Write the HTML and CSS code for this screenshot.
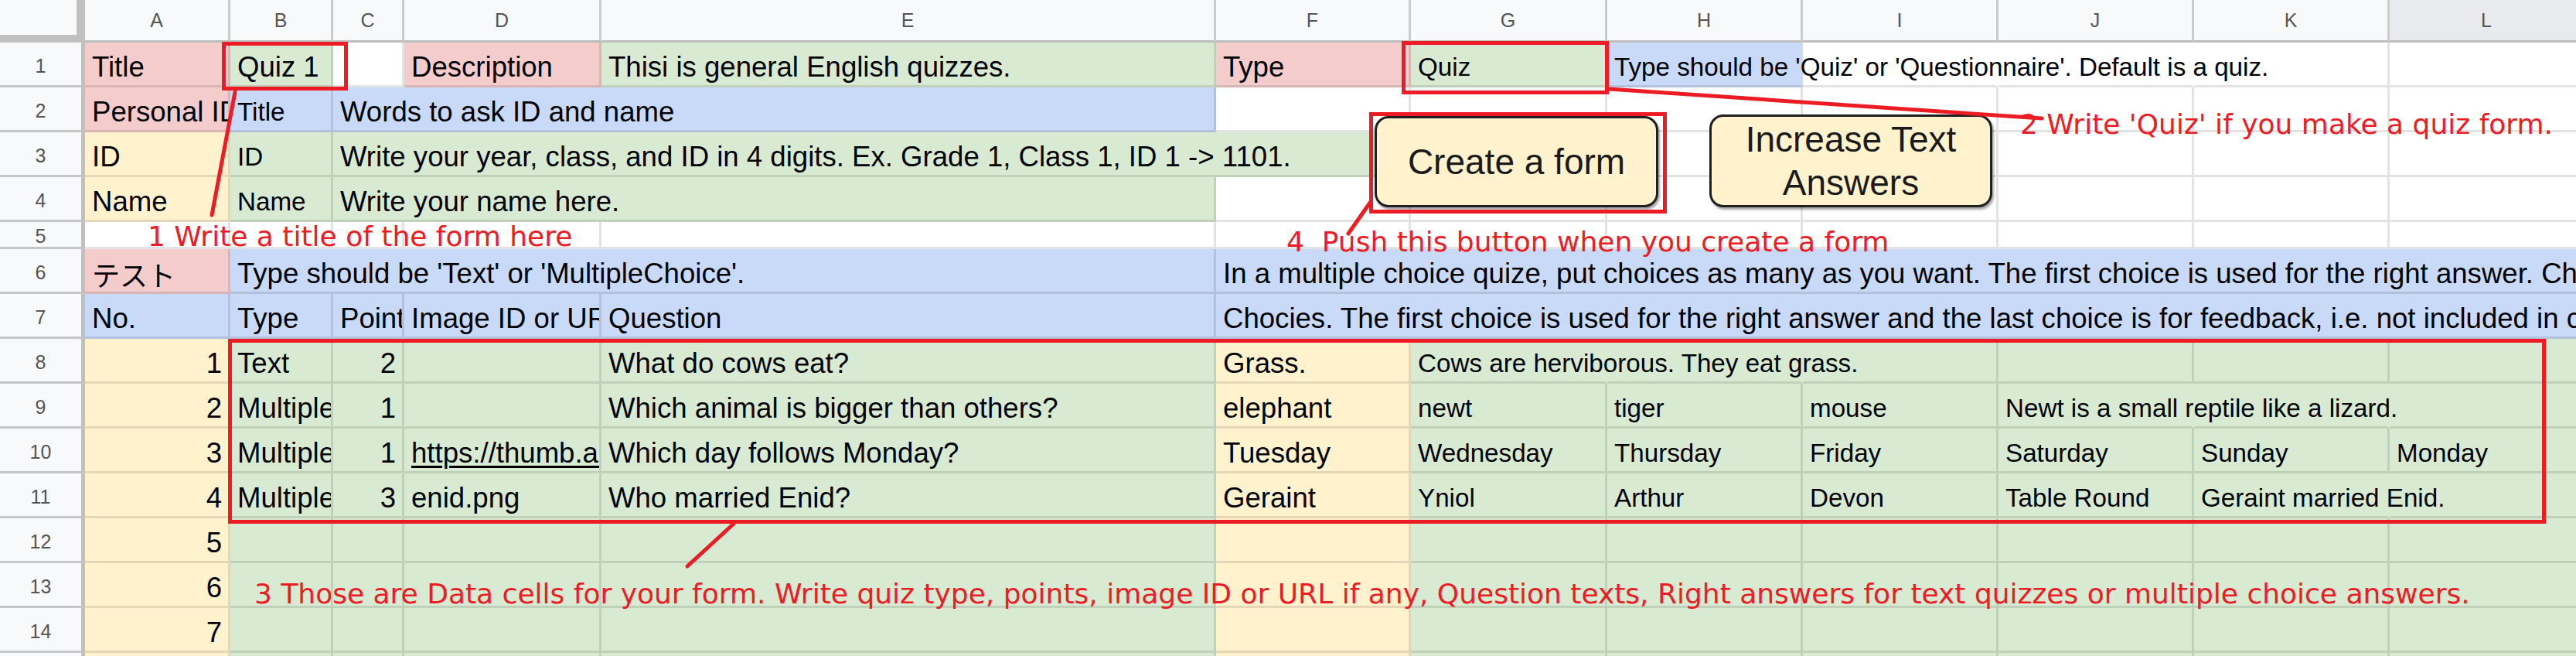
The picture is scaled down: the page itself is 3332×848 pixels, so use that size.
FILE: index.html
```html
<!DOCTYPE html>
<html>
<head>
<meta charset="utf-8">
<link rel="stylesheet" href="styles.css">
</head>
<body>
<div class="sheet">
  <div class="grid">
    <!-- header -->
    <div class="corner"></div>
    <div class="ch">A</div><div class="ch">B</div><div class="ch">C</div><div class="ch">D</div><div class="ch">E</div><div class="ch">F</div><div class="ch">G</div><div class="ch">H</div><div class="ch">I</div><div class="ch">J</div><div class="ch">K</div><div class="ch sel">L</div>

    <!-- row 1 -->
    <div class="rh">1</div>
    <div class="c pk">Title</div>
    <div class="c gr">Quiz 1</div>
    <div class="c"></div>
    <div class="c pk">Description</div>
    <div class="c gr">Thisi is general English quizzes.</div>
    <div class="c pk">Type</div>
    <div class="c gr s">Quiz</div>
    <div class="c bl s ov nb">Type should be 'Quiz' or 'Questionnaire'. Default is a quiz.</div>
    <div class="c nb"></div>
    <div class="c nb"></div>
    <div class="c"></div>
    <div class="c"></div>

    <!-- row 2 -->
    <div class="rh">2</div>
    <div class="c pk">Personal ID</div>
    <div class="c bl s">Title</div>
    <div class="c bl sp3">Words to ask ID and name</div>
    <div class="c"></div><div class="c"></div><div class="c"></div><div class="c"></div><div class="c"></div><div class="c"></div><div class="c"></div>

    <!-- row 3 -->
    <div class="rh">3</div>
    <div class="c yl">ID</div>
    <div class="c gr s">ID</div>
    <div class="c gr sp4">Write your year, class, and ID in 4 digits. Ex. Grade 1, Class 1, ID 1 -&gt; 1101.</div>
    <div class="c"></div><div class="c"></div><div class="c"></div><div class="c"></div><div class="c"></div><div class="c"></div>

    <!-- row 4 -->
    <div class="rh">4</div>
    <div class="c yl">Name</div>
    <div class="c gr s">Name</div>
    <div class="c gr sp3">Write your name here.</div>
    <div class="c"></div><div class="c"></div><div class="c"></div><div class="c"></div><div class="c"></div><div class="c"></div><div class="c"></div>

    <!-- row 5 -->
    <div class="rh">5</div>
    <div class="c"></div><div class="c"></div><div class="c"></div><div class="c"></div><div class="c"></div><div class="c"></div><div class="c"></div><div class="c"></div><div class="c"></div><div class="c"></div><div class="c"></div><div class="c"></div>

    <!-- row 6 -->
    <div class="rh">6</div>
    <div class="c pk jp">テスト</div>
    <div class="c bl sp4">Type should be 'Text' or 'MultipleChoice'.</div>
    <div class="c bl sp7">In a multiple choice quize, put choices as many as you want. The first choice is used for the right answer. Choices are shuffled automatically.</div>

    <!-- row 7 -->
    <div class="rh">7</div>
    <div class="c bl">No.</div>
    <div class="c bl">Type</div>
    <div class="c bl">Points</div>
    <div class="c bl">Image ID or URL</div>
    <div class="c bl">Question</div>
    <div class="c bl sp7">Chocies. The first choice is used for the right answer and the last choice is for feedback, i.e. not included in choices.</div>

    <!-- row 8 -->
    <div class="rh">8</div>
    <div class="c yl r">1</div>
    <div class="c gr">Text</div>
    <div class="c gr r">2</div>
    <div class="c gr"></div>
    <div class="c gr">What do cows eat?</div>
    <div class="c yl">Grass.</div>
    <div class="c gr s ov nb">Cows are herviborous. They eat grass.</div>
    <div class="c gr nb"></div>
    <div class="c gr"></div>
    <div class="c gr"></div>
    <div class="c gr"></div>
    <div class="c gr"></div>

    <!-- row 9 -->
    <div class="rh">9</div>
    <div class="c yl r">2</div>
    <div class="c gr">MultipleChoice</div>
    <div class="c gr r">1</div>
    <div class="c gr"></div>
    <div class="c gr">Which animal is bigger than others?</div>
    <div class="c yl">elephant</div>
    <div class="c gr s">newt</div>
    <div class="c gr s">tiger</div>
    <div class="c gr s">mouse</div>
    <div class="c gr s ov nb">Newt is a small reptile like a lizard.</div>
    <div class="c gr nb"></div>
    <div class="c gr"></div>

    <!-- row 10 -->
    <div class="rh">10</div>
    <div class="c yl r">3</div>
    <div class="c gr">MultipleChoice</div>
    <div class="c gr r">1</div>
    <div class="c gr"><span class="link">https://thumb.ac-illust.com/</span></div>
    <div class="c gr">Which day follows Monday?</div>
    <div class="c yl">Tuesday</div>
    <div class="c gr s">Wednesday</div>
    <div class="c gr s">Thursday</div>
    <div class="c gr s">Friday</div>
    <div class="c gr s">Saturday</div>
    <div class="c gr s">Sunday</div>
    <div class="c gr s">Monday</div>

    <!-- row 11 -->
    <div class="rh">11</div>
    <div class="c yl r">4</div>
    <div class="c gr">MultipleChoice</div>
    <div class="c gr r">3</div>
    <div class="c gr">enid.png</div>
    <div class="c gr">Who married Enid?</div>
    <div class="c yl">Geraint</div>
    <div class="c gr s">Yniol</div>
    <div class="c gr s">Arthur</div>
    <div class="c gr s">Devon</div>
    <div class="c gr s">Table Round</div>
    <div class="c gr s ov nb">Geraint married Enid.</div>
    <div class="c gr"></div>

    <!-- row 12 -->
    <div class="rh">12</div>
    <div class="c yl r">5</div>
    <div class="c gr"></div><div class="c gr"></div><div class="c gr"></div><div class="c gr"></div>
    <div class="c yl"></div>
    <div class="c gr"></div><div class="c gr"></div><div class="c gr"></div><div class="c gr"></div><div class="c gr"></div><div class="c gr"></div>

    <!-- row 13 -->
    <div class="rh">13</div>
    <div class="c yl r">6</div>
    <div class="c gr"></div><div class="c gr"></div><div class="c gr"></div><div class="c gr"></div>
    <div class="c yl"></div>
    <div class="c gr"></div><div class="c gr"></div><div class="c gr"></div><div class="c gr"></div><div class="c gr"></div><div class="c gr"></div>

    <!-- row 14 -->
    <div class="rh">14</div>
    <div class="c yl r">7</div>
    <div class="c gr"></div><div class="c gr"></div><div class="c gr"></div><div class="c gr"></div>
    <div class="c yl"></div>
    <div class="c gr"></div><div class="c gr"></div><div class="c gr"></div><div class="c gr"></div><div class="c gr"></div><div class="c gr"></div>

    <!-- row 15 -->
    <div class="rh">15</div>
    <div class="c yl r">8</div>
    <div class="c gr"></div><div class="c gr"></div><div class="c gr"></div><div class="c gr"></div>
    <div class="c yl"></div>
    <div class="c gr"></div><div class="c gr"></div><div class="c gr"></div><div class="c gr"></div><div class="c gr"></div><div class="c gr"></div>
  </div>

  <!-- drawings over the sheet -->
  <div class="btn btn-create">Create a form</div>
  <div class="btn btn-increase">Increase Text<br>Answers</div>

  <svg class="marks" width="3332" height="848" viewBox="0 0 3332 848" xmlns="http://www.w3.org/2000/svg">
    <g fill="none" stroke="#ed1c24" stroke-width="5">
      <rect x="289.5" y="56.5" width="158" height="58"/>
      <rect x="1815.5" y="55.5" width="263" height="64"/>
      <rect x="1773.5" y="147.5" width="380" height="126"/>
      <rect x="297.5" y="440.5" width="2993" height="234"/>
    </g>
    <g stroke="#ed1c24" stroke-width="5" stroke-linecap="round">
      <line x1="304" y1="119" x2="274" y2="278"/>
      <line x1="2081" y1="115" x2="2641" y2="153"/>
      <line x1="1772" y1="262" x2="1744" y2="302"/>
      <line x1="949" y1="677" x2="889" y2="732"/>
    </g>
  </svg>

  <div class="note n1">1 Write a title of the form here</div>
  <div class="note n2">2 Write 'Quiz' if you make a quiz form.</div>
  <div class="note n3">3 Those are Data cells for your form. Write quiz type, points, image ID or URL if any, Question texts, Right answers for text quizzes or multiple choice answers.</div>
  <div class="note n4">4&nbsp; Push this button when you create a form</div>
</div>
</body>
</html>
```

FILE: styles.css
```css
* { box-sizing: border-box; }

body {
  margin: 0;
  width: 3332px;
  height: 848px;
  overflow: hidden;
  background: #ffffff;
  font-family: "Liberation Sans", Arial, sans-serif;
}

.sheet {
  position: relative;
  width: 3332px;
  height: 848px;
  overflow: hidden;
}

.grid {
  display: grid;
  grid-template-columns: 110px 188px 133px 92px 255px 795px 252px 254px 253px 253px 253px 253px 253px;
  grid-template-rows: 55px repeat(4, 58px) 35px repeat(10, 58px);
}

.corner {
  background: #f8f9fa;
  border-right: 11px solid #c0c0c0;
  border-bottom: 10px solid #c0c0c0;
}

.ch {
  background: #f8f9fa;
  border-right: 3px solid #cbcbcb;
  border-bottom: 3px solid #bdbdbd;
  display: flex;
  align-items: center;
  justify-content: center;
  font-family: "Liberation Sans", Arial, sans-serif;
  font-size: 25px;
  color: #555555;
}

.ch.sel { background: #e8eaed; }

.rh {
  background: #f8f9fa;
  border-right: 5px solid #c0c0c0;
  border-bottom: 3px solid #c6c6c6;
  display: flex;
  align-items: center;
  justify-content: center;
  padding-top: 5px;
  font-size: 25px;
  color: #555555;
}

.c {
  background: #ffffff;
  border-right: 3px solid rgba(0, 0, 0, 0.11);
  border-bottom: 3px solid rgba(0, 0, 0, 0.11);
  display: flex;
  align-items: flex-end;
  padding: 0 8px 3px 9px;
  font-size: 36.6px;
  line-height: 40px;
  color: #000000;
  white-space: nowrap;
  overflow: hidden;
  min-width: 0;
}

.c.s { font-size: 33.2px; }
.c.r { justify-content: flex-end; }
.c.jp { font-family: "Noto Sans CJK JP", sans-serif; font-size: 36px; }

.pk { background-color: #f4cccc; }
.gr { background-color: #d9ead3; }
.bl { background-color: #c9daf8; }
.yl { background-color: #fff2cc; }

.nb { border-right-color: transparent; }
.ov { overflow: visible; position: relative; z-index: 1; }

.sp3 { grid-column: span 3; }
.sp4 { grid-column: span 4; }
.sp7 { grid-column: span 7; }

.link { text-decoration: underline; text-decoration-thickness: 3px; text-underline-offset: 4px; }

.btn {
  position: absolute;
  z-index: 5;
  background: #fff2cc;
  border: 3px solid #1f1f1f;
  border-radius: 18px;
  box-shadow: 2px 3px 3px rgba(0, 0, 0, 0.35);
  display: flex;
  align-items: center;
  justify-content: center;
  text-align: center;
  font-family: "Liberation Sans", Arial, sans-serif;
  font-size: 46px;
  line-height: 56px;
  color: #1a1a1a;
}

.btn-create { left: 1778px; top: 150px; width: 367px; height: 118px; }
.btn-increase { left: 2211px; top: 148px; width: 366px; height: 120px; }

.marks {
  position: absolute;
  left: 0;
  top: 0;
  z-index: 6;
}

.note {
  position: absolute;
  z-index: 7;
  color: #ed1c24;
  font-family: "DejaVu Sans", sans-serif;
  font-size: 36px;
  line-height: 36px;
  white-space: nowrap;
}

.n1 { left: 191px; top: 288px; }
.n2 { left: 2613px; top: 143px; }
.n3 { left: 329px; top: 750px; }
.n4 { left: 1664px; top: 295px; }
```
